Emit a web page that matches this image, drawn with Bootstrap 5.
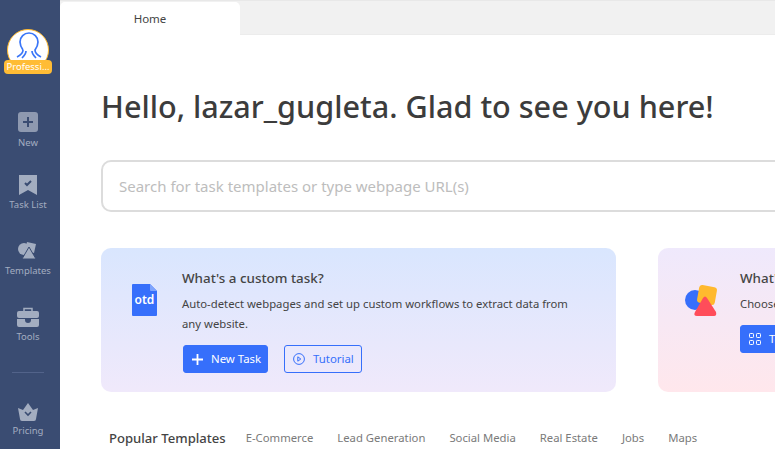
<!doctype html>
<html lang="en"><head><meta charset="utf-8"><title>Home</title>
<link href="https://cdn.jsdelivr.net/npm/bootstrap@5.3.0/dist/css/bootstrap.min.css" rel="stylesheet">
<style>
html,body{height:449px;overflow:hidden}
body{font-family:"Noto Sans","Open Sans","Liberation Sans",sans-serif;color:#3c3c3c;background:#fff}
.app-shell{width:775px;height:449px;overflow:hidden}
.side-rail{width:60px;flex:none;background:#3a4c72;height:449px}
.avatar-wrap{margin-top:29px;width:48px;height:45px}
.avatar-disc{width:42px;height:42px;border-radius:50%;background:#fff;border:1px solid #ffb92e;position:relative;margin:0 auto}
.avatar-disc svg{position:absolute;left:7px;top:2px}
.plan-tag{position:absolute;left:4px;top:60px;width:48px;height:14px;background:#ffbc35;border-radius:4px;color:#fff;font-size:9.5px;line-height:14px;text-align:center;white-space:nowrap;overflow:hidden}
.rail-item{width:56px;color:#a3adc0;font-size:9.5px;line-height:14px;text-align:center;white-space:nowrap}
.rail-item svg{display:block;margin:0 auto 3px}
.rail-new{margin-top:38px}
.rail-new svg{margin-bottom:4px}
.rail-task{margin-top:25px}
.rail-tpl{margin-top:29px}
.rail-tools{margin-top:29px}
.rail-price{margin-top:30px}
.rail-rule{width:32px;height:1px;background:#52638a;margin-left:12px;margin-top:28px}
.main-pane{width:715px;flex:none;overflow:hidden}
.tab-strip{height:35px;background:#f1f1f1;border-top:1px solid #e8e8e8;border-bottom:1px solid #ececec}
.tab-home{width:180px;height:34px;background:#fff;border-radius:5px 5px 0 0;font-size:11.5px;line-height:33px;text-align:center;color:#444;margin-top:1px}
.page-body{padding-left:41px;width:1100px}
.hello{font-size:30.6px;line-height:44px;font-weight:500;color:#3c3c3c;margin:0;padding-top:49px}
.search-box{width:900px;height:52px;margin-top:32px;border:2px solid #dcdcdc;border-radius:10px;padding:0 16px;line-height:48px;font-size:15px;color:#bdbdbd}
.cards-row{margin-top:36px;gap:42px}
.promo{width:515px;height:144px;border-radius:10px;flex:none}
.promo-a{background:linear-gradient(180deg,#d9e6fe,#f0e9fb)}
.promo-b{background:linear-gradient(180deg,#efe9fc,#ffe7ec)}
.promo-ico{width:81px;flex:none;padding-top:36px}
.promo-ico svg{display:block;margin-left:31px}
.promo-b .promo-ico{width:82px}
.promo-b .promo-ico svg{margin-left:27px}
.promo-txt{padding-top:20px}
.promo-h{font-size:13.4px;line-height:20px;font-weight:500;color:#454545;margin:0 0 6px}
.promo-p{font-size:11.3px;line-height:20px;color:#444;margin:0 0 11px;width:400px}
.btn-fill,.btn-line{height:28px;font-size:11.4px;line-height:26px;padding:0;border-radius:3px;display:inline-flex;align-items:center}
.btn-fill{width:85px;background:#366ffb;border:1px solid #366ffb;color:#fff;padding-left:8px;margin-left:1px}
.btn-wide{width:100px;margin-left:0}
.btn-line{width:78px;background:transparent;border:1px solid #366ffb;color:#366ffb;margin-left:16px;padding-left:8px}
.btn-fill svg,.btn-line svg{margin-right:8px}
.tpl-row{margin-top:36px;font-size:11.3px;line-height:20px;color:#7a7a7a;gap:24px;padding-left:8px}
.tpl-title{font-size:13.1px;font-weight:500;color:#444;margin-right:-4px}
</style></head><body>
<div class="app-shell d-flex">
<nav class="side-rail position-relative">
 <div class="avatar-wrap ms-1 pt-0"><div class="avatar-disc">
  <svg width="28" height="30" viewBox="0 0 28 30" fill="none" stroke="#3a76f8" stroke-width="1.7"><path d="M8 18c-2-3-3-5-3-8a9 9 0 0 1 18 0c0 3-1 5-3 8 0 3 2 5 6 7M8 18c0 3-2 5-6 7M11 19c0 3-2 5-4 7M17 19c0 3 2 5 4 7"/></svg>
 </div></div>
 <div class="plan-tag">Professi...</div>
 <div class="rail-item rail-new">
  <svg width="20" height="20" viewBox="0 0 20 20"><rect width="20" height="20" rx="3" fill="#8e99b0"/><path d="M10 5v10M5 10h10" stroke="#3a4c72" stroke-width="2"/></svg>New</div>
 <div class="rail-item rail-task">
  <svg width="18" height="20" viewBox="0 0 18 20"><path d="M0 0h18v20l-9-5-9 5z" fill="#a3adc0"/><path d="M6 8l2 2 4-4" stroke="#3a4c72" stroke-width="2" fill="none"/></svg>Task List</div>
 <div class="rail-item rail-tpl">
  <svg width="20" height="20" viewBox="0 0 20 20" fill="#a3adc0"><circle cx="6" cy="8" r="6"/><path d="M9 1l9 2-2 9-9-2z"/><path d="M11 6l7 12H4z" stroke="#3a4c72"/></svg>Templates</div>
 <div class="rail-item rail-tools">
  <svg width="22" height="20" viewBox="0 0 22 20" fill="#a3adc0"><path d="M7 4V1.5h8V4" fill="none" stroke="#a3adc0" stroke-width="1.5"/><rect y="4" width="22" height="7" rx="2"/><path d="M0 12h8v1a3 3 0 0 0 6 0v-1h8v6a2 2 0 0 1-2 2H2a2 2 0 0 1-2-2z"/></svg>Tools</div>
 <div class="rail-rule"></div>
 <div class="rail-item rail-price">
  <svg width="20" height="18" viewBox="0 0 20 18" fill="#a3adc0"><path d="M0 5l5 2 5-7 5 7 5-2-2 11a2 2 0 0 1-2 2H4a2 2 0 0 1-2-2z"/><path d="M7 9l3 3 3-3" stroke="#3a4c72" stroke-width="1.6" fill="none"/></svg>Pricing</div>
</nav>
<main class="main-pane">
 <div class="tab-strip"><div class="tab-home">Home</div></div>
 <div class="page-body">
  <h1 class="hello">Hello, lazar_gugleta. Glad to see you here!</h1>
  <div class="search-box">Search for task templates or type webpage URL(s)</div>
  <div class="cards-row d-flex">
   <section class="promo promo-a d-flex">
    <div class="promo-ico"><svg width="25" height="32" viewBox="0 0 25 32"><path d="M1 0h17l7 7v24a1 1 0 0 1-1 1H1a1 1 0 0 1-1-1V1a1 1 0 0 1 1-1z" fill="#366ffb"/><path d="M18 0l7 7h-6a1 1 0 0 1-1-1z" fill="#7ea4fd"/><text x="12.5" y="20" font-size="12" font-weight="600" fill="#fff" text-anchor="middle" font-family="Noto Sans">otd</text></svg></div>
    <div class="promo-txt">
     <h2 class="promo-h">What's a custom task?</h2>
     <p class="promo-p">Auto-detect webpages and set up custom workflows to extract data from any website.</p>
     <div class="d-flex">
      <button class="btn-fill"><svg width="11" height="11" viewBox="0 0 11 11"><path d="M5.5 0v11M0 5.5h11" stroke="#fff" stroke-width="1.8"/></svg>New Task</button>
      <button class="btn-line"><svg width="12" height="12" viewBox="0 0 12 12" fill="none" stroke="#366ffb"><circle cx="6" cy="6" r="5.4"/><path d="M4.8 3.8l3 2.2-3 2.2z"/></svg>Tutorial</button>
     </div>
    </div>
   </section>
   <section class="promo promo-b d-flex">
    <div class="promo-ico"><svg width="34" height="33" viewBox="0 0 34 33"><circle cx="10" cy="16" r="10" fill="#366ffb"/><rect x="13" y="2" width="18" height="18" rx="3" fill="#ffb92e" transform="rotate(10 22 11)"/><path d="M18 14q2-3 4 0l9 14q1 4-2 4H12q-4 0-2-4z" fill="#ff4d5a"/></svg></div>
    <div class="promo-txt">
     <h2 class="promo-h">What's a template?</h2>
     <p class="promo-p">Choose from hundreds of preset templates and get data with zero setup.</p>
     <button class="btn-fill btn-wide"><svg width="12" height="12" viewBox="0 0 12 12" fill="none" stroke="#fff"><rect x=".5" y=".5" width="4" height="4" rx=".8"/><rect x="7.5" y=".5" width="4" height="4" rx=".8"/><rect x=".5" y="7.5" width="4" height="4" rx=".8"/><rect x="7.5" y="7.5" width="4" height="4" rx=".8"/></svg>Templates</button>
    </div>
   </section>
  </div>
  <div class="tpl-row d-flex"><span class="tpl-title">Popular Templates</span><span>E-Commerce</span><span>Lead Generation</span><span>Social Media</span><span>Real Estate</span><span>Jobs</span><span>Maps</span></div>
 </div>
</main>
</div>
<script src="https://cdn.jsdelivr.net/npm/bootstrap@5.3.0/dist/js/bootstrap.bundle.min.js"></script>
</body></html>
